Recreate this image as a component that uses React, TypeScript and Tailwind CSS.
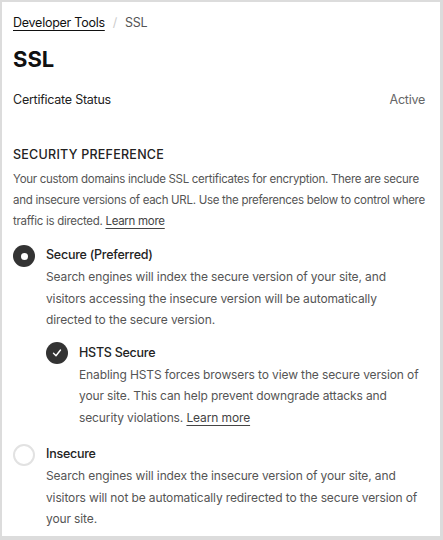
export default function App() {
  return (
    <div
      className="h-[540px] w-[443px] bg-[#dcdcdc] pt-[2px] pl-[2px] pr-[3px] pb-[4px]"
      style={{ fontFamily: "Inter, 'Liberation Sans', sans-serif" }}
    >
      <div className="h-full bg-white pl-[11px] pr-[15px] overflow-hidden">
        {/* breadcrumb */}
        <div className="flex items-center pt-[12px] text-[12.5px] leading-[18px] tracking-[-0.02em]">
          <span className="text-[#111] underline underline-offset-[3px]">Developer Tools</span>
          <span className="mx-[8px] text-[#ccc]">/</span>
          <span className="text-[#555]">SSL</span>
        </div>

        <h1 className="mt-[13px] text-[22px] leading-[28px] font-bold text-[#111]">SSL</h1>

        <div className="mt-[18px] flex justify-between text-[12.5px] leading-[18px] tracking-[-0.02em]">
          <span className="text-[#222]">Certificate Status</span>
          <span className="text-[#666]">Active</span>
        </div>

        <div className="mt-[37px] text-[12.5px] leading-[18px] font-medium tracking-[0.02em] text-[#222]">
          SECURITY PREFERENCE
        </div>
        <p className="mt-[5px] text-[11.5px] leading-[21px] tracking-[-0.025em] text-[#555]">
          Your custom domains include SSL certificates for encryption. There are secure and
          insecure versions of each URL. Use the preferences below to control where traffic is
          directed.{" "}
          <span className="underline underline-offset-[3px] text-[#444]">Learn more</span>
        </p>

        {/* secure */}
        <div className="mt-[14px] flex gap-[11px]">
          <div className="mt-[-1px] flex h-[22px] w-[22px] shrink-0 items-center justify-center rounded-full bg-[#333]">
            <div className="h-[7px] w-[7px] rounded-full bg-white" />
          </div>
          <div>
            <div className="text-[12.5px] leading-[18px] font-medium tracking-[-0.02em] text-[#222]">Secure (Preferred)</div>
            <p className="mt-[2px] text-[12px] leading-[21.5px] tracking-[-0.01em] text-[#555]">
              Search engines will index the secure version of your site, and
              <br />
              visitors accessing the insecure version will be automatically
              <br />
              directed to the secure version.
            </p>

            <div className="mt-[13px] flex gap-[11px]">
              <div className="mt-[-2px] flex h-[22px] w-[22px] shrink-0 items-center justify-center rounded-full bg-[#333]">
                <svg width="10" height="10" viewBox="0 0 10 10" fill="none">
                  <path d="M1.5 5.3 L4 7.8 L8.5 2" stroke="white" strokeWidth="1.4" strokeLinecap="round" strokeLinejoin="round" />
                </svg>
              </div>
              <div>
                <div className="text-[12.5px] leading-[18px] font-medium tracking-[-0.02em] text-[#222]">HSTS Secure</div>
                <p className="mt-[2px] text-[12px] leading-[21.5px] tracking-[-0.01em] text-[#555]">
                  Enabling HSTS forces browsers to view the secure version of
                  <br />
                  your site. This can help prevent downgrade attacks and
                  <br />
                  security violations.{" "}
                  <span className="underline underline-offset-[3px] text-[#444]">Learn more</span>
                </p>
              </div>
            </div>
          </div>
        </div>

        {/* insecure */}
        <div className="mt-[17px] flex gap-[11px]">
          <div className="mt-[-1px] h-[22px] w-[22px] shrink-0 rounded-full border-2 border-[#e2e2e2]" />
          <div>
            <div className="text-[12.5px] leading-[18px] font-medium tracking-[-0.02em] text-[#222]">Insecure</div>
            <p className="mt-[2px] text-[12px] leading-[21.5px] tracking-[-0.01em] text-[#555]">
              Search engines will index the insecure version of your site, and
              <br />
              visitors will not be automatically redirected to the secure version of
              <br />
              your site.
            </p>
          </div>
        </div>
      </div>
    </div>
  );
}
